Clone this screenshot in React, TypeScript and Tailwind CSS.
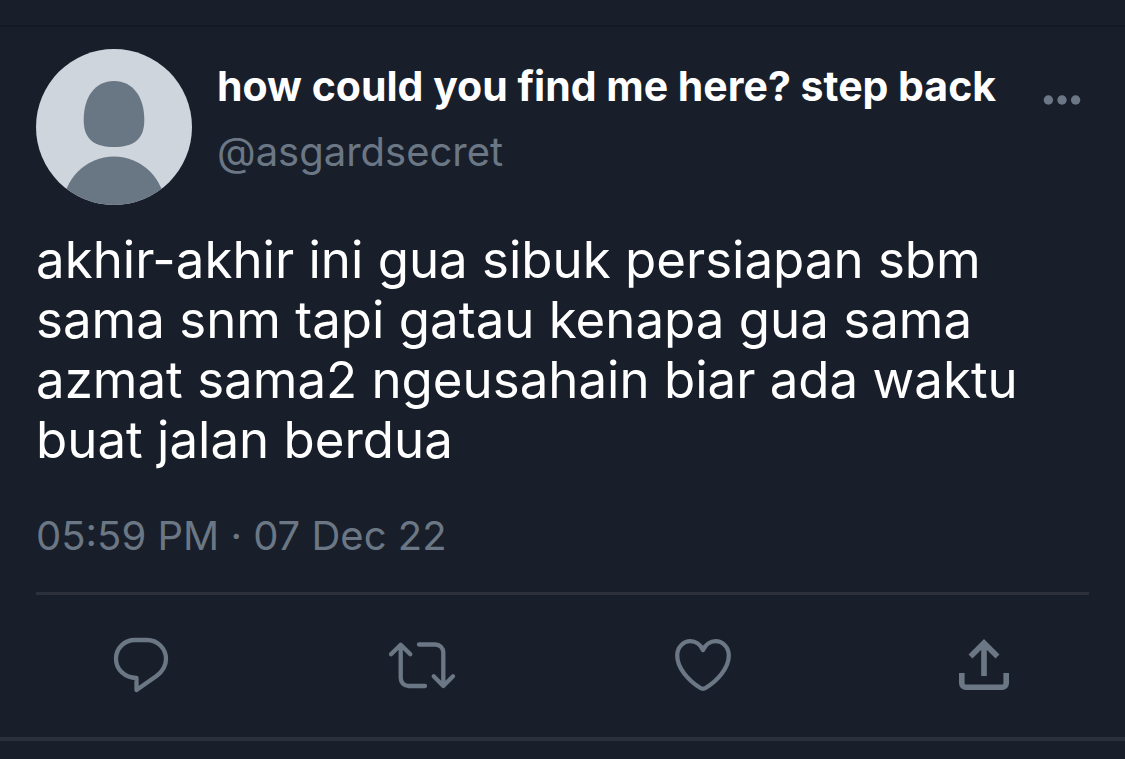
import React from 'react';

function Avatar() {
  return (
    <svg viewBox="0 0 156 156" className="size-39 shrink-0" role="img" aria-label="Profile picture">
      <defs>
        <clipPath id="avatar-circle">
          <circle cx="78" cy="78" r="78" />
        </clipPath>
      </defs>
      <g clipPath="url(#avatar-circle)">
        <rect width="156" height="156" fill="#ced5dc" />
        <path
          d="M78 32C97 32 108.3 48 108.3 71C108.3 91 97 98 78 98C59 98 47.7 91 47.7 71C47.7 48 59 32 78 32Z"
          fill="#697684"
        />
        <circle cx="78" cy="158.6" r="51" fill="#697684" />
      </g>
    </svg>
  );
}

function ActionButton({ label, children }: { label: string; children: React.ReactNode }) {
  return (
    <button type="button" aria-label={label} className="mx-auto flex items-center justify-center text-[#6b7785]">
      <svg
        viewBox="-4 -4 72 72"
        className="size-18"
        fill="none"
        stroke="currentColor"
        strokeWidth="4.3"
        aria-hidden="true"
      >
        {children}
      </svg>
    </button>
  );
}

export default function App() {
  return (
    <main className="min-h-screen bg-[#181f2a] pt-[25px] font-['Inter',sans-serif] text-white">
      <article className="border-t-2 border-b-4 border-t-[#141a24] border-b-[#2b303a] pb-9">
        <div className="px-9 pt-[22px]">
          <header className="flex">
            <Avatar />
            <div className="ml-[25px] min-w-0 flex-1 pt-3">
              <h1 className="text-[41px] leading-[50px] font-bold">how could you find me here? step back</h1>
              <p className="mt-4 text-[40px] leading-[50px] text-[#6b7785]">@asgardsecret</p>
            </div>
            <button
              type="button"
              aria-label="More options"
              className="mt-[31px] mr-2 flex size-10 items-center justify-center text-[#6b7785]"
            >
              <svg viewBox="0 0 40 12" className="h-3 w-10" fill="currentColor" aria-hidden="true">
                <circle cx="7.4" cy="6" r="4.7" />
                <circle cx="21" cy="6" r="4.7" />
                <circle cx="34.6" cy="6" r="4.7" />
              </svg>
            </button>
          </header>
          <p className="mt-[25px] max-w-[1010px] text-[51px] leading-[60px]">
            akhir-akhir ini gua sibuk persiapan sbm sama snm tapi gatau kenapa gua sama azmat sama2 ngeusahain biar ada
            waktu buat jalan berdua
          </p>
          <time dateTime="2022-12-07T17:59" className="mt-[41px] block text-[40px] leading-[50px] text-[#6b7785]">
            05:59 PM · 07 Dec 22
          </time>
          <hr className="mt-[31px] border-t-3 border-[#2b303a]" />
        </div>
        <footer className="mt-[34px] grid grid-cols-4">
          <ActionButton label="Reply">
            <path
              d="M27.5 45C16 44.7 7 36.8 7 26C7 15 15.5 7 26 7H38C48.5 7 57 15.5 57 26C57 33 53.5 38.5 47.5 43L27.5 57Z"
              strokeLinejoin="round"
            />
          </ActionButton>
          <ActionButton label="Retweet">
            <g strokeLinecap="round" strokeLinejoin="round">
              <path d="M1 21.3L10.7 11.7L20.3 21.3M10.7 12V45a8 8 0 0 0 8 8H35" />
              <path d="M63 43.3L53.3 53L43.7 43.3M53.3 52.7V19.5a8 8 0 0 0-8-8H29" />
            </g>
          </ActionButton>
          <ActionButton label="Like">
            <path
              d="M32 17C29.5 11.5 24.5 8.2 19.5 8.2C12 8.2 6.2 14.5 6.2 22.5C6.2 35 17.5 48 29.5 55Q32 56.5 34.5 55C46.5 48 57.8 35 57.8 22.5C57.8 14.5 52 8.2 44.5 8.2C39.5 8.2 34.5 11.5 32 17Z"
              strokeLinejoin="round"
            />
          </ActionButton>
          <ActionButton label="Share">
            <g strokeWidth="5.6">
              <path d="M9.8 40V50.2a4 4 0 0 0 4 4H50.2a4 4 0 0 0 4-4V40" />
              <path d="M18.5 23.5L32 10L45.5 23.5M32 11V43" />
            </g>
          </ActionButton>
        </footer>
      </article>
    </main>
  );
}
